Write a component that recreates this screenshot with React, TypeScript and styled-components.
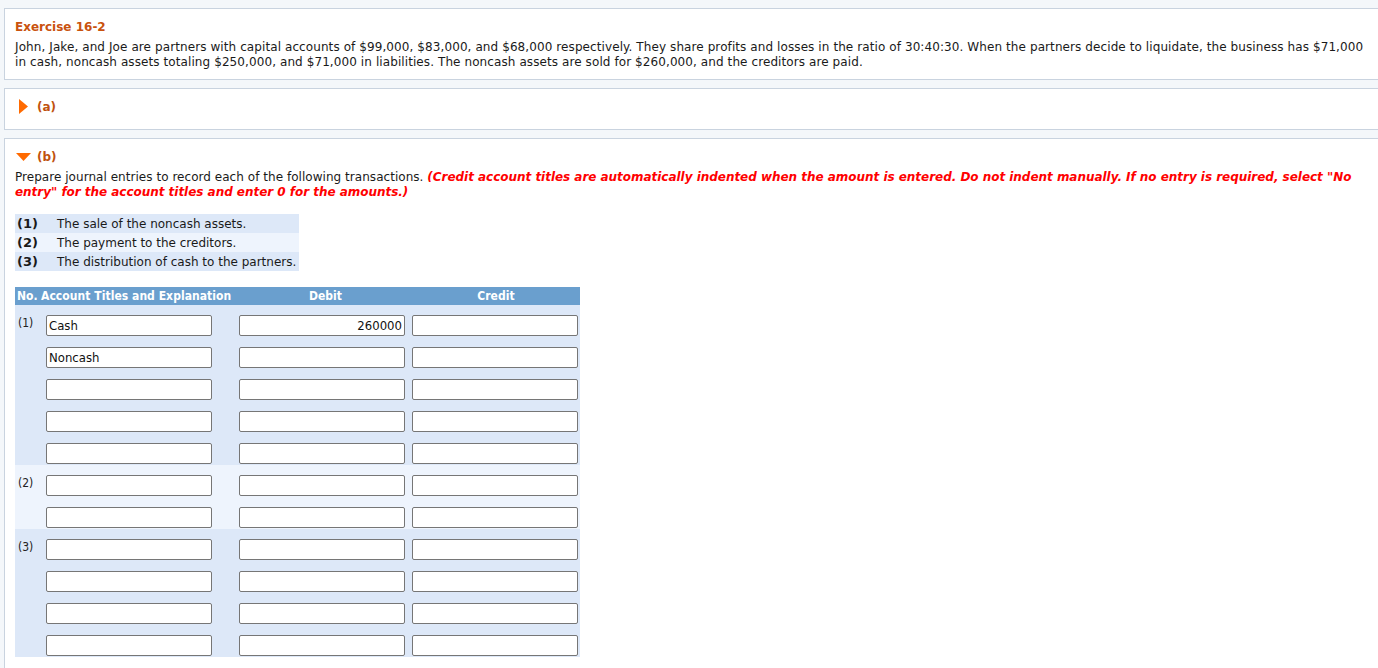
import React from "react";
import styled, { createGlobalStyle } from "styled-components";

const GlobalStyle = createGlobalStyle`
  html, body {
    margin: 0;
    padding: 0;
    background: #f4f7fa;
    overflow: hidden;
  }
  body {
    font-family: "DejaVu Sans", Verdana, sans-serif;
    font-size: 12px;
    color: #1a1a1a;
  }
`;

const Page = styled.div`
  padding: 8px 0 0 4px;
`;

const Panel = styled.section<{ $pt?: number; $pb?: number }>`
  background: #ffffff;
  border: 1px solid #c9d3df;
  border-right: none;
  margin-right: -20px;
  margin-bottom: 8px;
  padding: ${(p) => p.$pt ?? 10}px 10px ${(p) => p.$pb ?? 10}px 10px;
`;

const Title = styled.div`
  color: #c9520e;
  font-weight: bold;
  font-size: 12px;
  line-height: 15px;
  margin-bottom: 5px;
`;

const Text = styled.div`
  line-height: 15px;
  font-size: 12px;
  letter-spacing: 0.09px;
  padding-right: 10px;
`;

const PartHeader = styled.div`
  display: flex;
  align-items: center;
  gap: 6px;
  height: 15px;
  color: #c0520f;
  font-weight: bold;
  font-size: 12px;
`;

const ArrowBox = styled.span`
  width: 15px;
  display: flex;
  align-items: center;
  justify-content: center;
  margin-left: 1px;
`;

const Instructions = styled.div`
  margin-top: 6px;
  line-height: 15px;
  letter-spacing: 0.04px;
`;

const Red = styled.span`
  color: #ff0000;
  font-weight: bold;
  font-style: italic;
  letter-spacing: -0.03px;
`;

const TxTable = styled.div`
  margin-top: 14px;
  width: 284px;
`;

const TxRow = styled.div<{ $alt?: boolean }>`
  display: flex;
  align-items: center;
  height: 19px;
  background: ${(p) => (p.$alt ? "#eef4fd" : "#dde8f8")};
`;

const TxNum = styled.span`
  width: 40px;
  padding-left: 2px;
  font-weight: bold;
  font-size: 13px;
`;

const TxText = styled.span`
  white-space: nowrap;
`;

const Journal = styled.div`
  margin-top: 16px;
  width: 565px;
`;

const HeaderRow = styled.div`
  display: grid;
  grid-template-columns: 24px 200px 173px 168px;
  height: 18px;
  align-items: center;
  background: #6a9fce;
  color: #ffffff;
  font-family: "DejaVu Sans Condensed", "Liberation Sans", sans-serif;
  font-weight: bold;
  font-size: 12px;
  letter-spacing: 0.05px;
`;

const HeadCell = styled.span<{ $center?: boolean }>`
  text-align: ${(p) => (p.$center ? "center" : "left")};
  padding-left: ${(p) => (p.$center ? 0 : 2)}px;
  white-space: nowrap;
`;

const Group = styled.div<{ $alt?: boolean }>`
  background: ${(p) => (p.$alt ? "#eef4fd" : "#dde8f8")};
`;

const EntryRow = styled.div`
  display: grid;
  grid-template-columns: 31px 193px 173px 168px;
  height: 32px;
  padding-top: 10px;
  box-sizing: border-box;
`;

const NumCell = styled.span`
  font-family: "DejaVu Sans Condensed", "Liberation Sans", sans-serif;
  font-size: 12px;
  line-height: 14px;
  padding-left: 3px;
  padding-top: 1px;
  color: #222;
`;

const Field = styled.input<{ $right?: boolean }>`
  display: block;
  width: 166px;
  height: 21px;
  box-sizing: border-box;
  border: 1px solid #767676;
  border-radius: 2px;
  background: #ffffff;
  padding: 0 2px;
  font-family: "DejaVu Sans Condensed", "Liberation Sans", sans-serif;
  font-size: 13px;
  color: #111;
  text-align: ${(p) => (p.$right ? "right" : "left")};
  outline: none;
`;

const RightArrow = () => (
  <svg width="9" height="15" viewBox="0 0 9 15">
    <polygon points="0,0 9,7.5 0,15" fill="#ff6a00" />
  </svg>
);

const DownArrow = () => (
  <svg width="15" height="8" viewBox="0 0 15 8">
    <polygon points="0,0 15,0 7.5,8" fill="#ff6a00" />
  </svg>
);

type Entry = { account?: string; debit?: string; credit?: string };

const groups: { label: string; alt: boolean; rows: Entry[] }[] = [
  {
    label: "(1)",
    alt: false,
    rows: [{ account: "Cash", debit: "260000" }, { account: "Noncash" }, {}, {}, {}],
  },
  { label: "(2)", alt: true, rows: [{}, {}] },
  { label: "(3)", alt: false, rows: [{}, {}, {}, {}] },
];

const transactions = [
  "The sale of the noncash assets.",
  "The payment to the creditors.",
  "The distribution of cash to the partners.",
];

export default function App() {
  return (
    <>
      <GlobalStyle />
      <Page>
        <Panel $pt={11} $pb={9}>
          <Title>Exercise 16-2</Title>
          <Text>
            John, Jake, and Joe are partners with capital accounts of $99,000, $83,000, and $68,000
            respectively. They share profits and losses in the ratio of 30:40:30. When the partners
            decide to liquidate, the business has $71,000 in cash, noncash assets totaling $250,000,
            and $71,000 in liabilities. The noncash assets are sold for $260,000, and the creditors
            are paid.
          </Text>
        </Panel>
        <Panel $pb={15}>
          <PartHeader>
            <ArrowBox>
              <RightArrow />
            </ArrowBox>
            (a)
          </PartHeader>
        </Panel>
        <Panel $pb={24}>
          <PartHeader>
            <ArrowBox>
              <DownArrow />
            </ArrowBox>
            (b)
          </PartHeader>
          <Instructions>
            Prepare journal entries to record each of the following transactions.{" "}
            <Red>
              (Credit account titles are automatically indented when the amount is entered. Do not
              indent manually. If no entry is required, select "No entry" for the account titles and
              enter 0 for the amounts.)
            </Red>
          </Instructions>
          <TxTable>
            {transactions.map((t, i) => (
              <TxRow key={i} $alt={i === 1}>
                <TxNum>({i + 1})</TxNum>
                <TxText>{t}</TxText>
              </TxRow>
            ))}
          </TxTable>
          <Journal>
            <HeaderRow>
              <HeadCell>No.</HeadCell>
              <HeadCell>Account Titles and Explanation</HeadCell>
              <HeadCell $center>Debit</HeadCell>
              <HeadCell $center>Credit</HeadCell>
            </HeaderRow>
            {groups.map((g) => (
              <Group key={g.label} $alt={g.alt}>
                {g.rows.map((r, i) => (
                  <EntryRow key={i}>
                    <NumCell>{i === 0 ? g.label : ""}</NumCell>
                    <span>
                      <Field defaultValue={r.account ?? ""} />
                    </span>
                    <span>
                      <Field $right defaultValue={r.debit ?? ""} />
                    </span>
                    <span>
                      <Field $right defaultValue={r.credit ?? ""} />
                    </span>
                  </EntryRow>
                ))}
              </Group>
            ))}
          </Journal>
        </Panel>
      </Page>
    </>
  );
}
